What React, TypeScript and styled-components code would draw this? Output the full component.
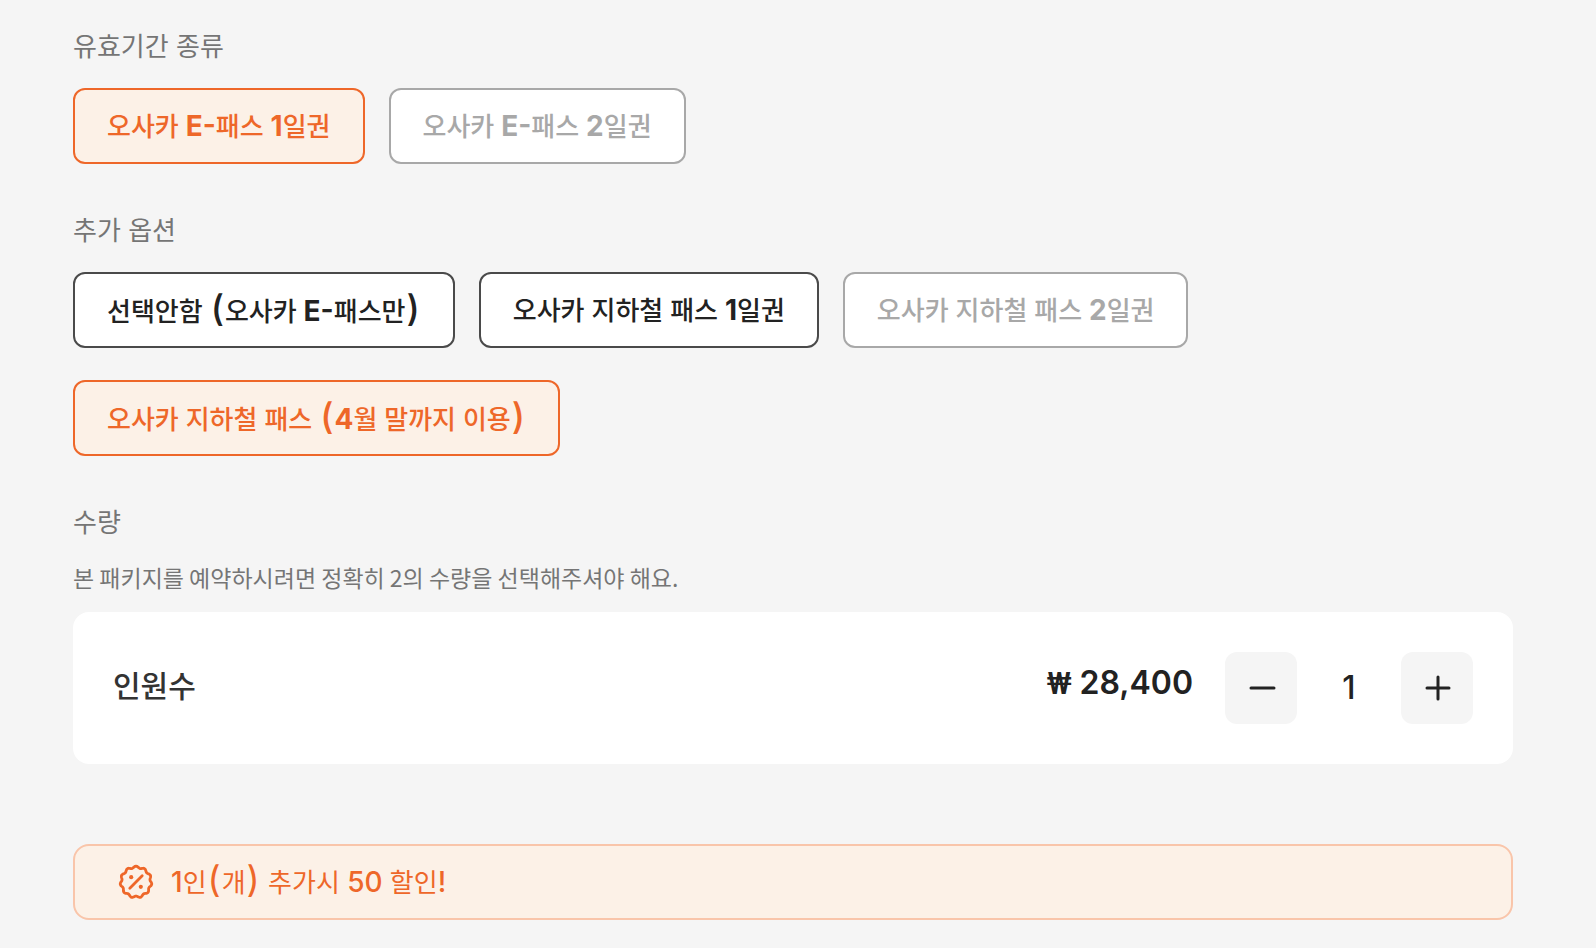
import { useState } from "react";
import styled, { createGlobalStyle, css } from "styled-components";

const GlobalStyle = createGlobalStyle`
  * { box-sizing: border-box; }
  body {
    margin: 0;
    background: #f5f5f5;
    color: #222222;
    font-family: Inter, "Noto Sans CJK KR", sans-serif;
    font-size: 26px;
  }
  button { font: inherit; cursor: pointer; }
`;

const Page = styled.main`
  display: flex;
  flex-direction: column;
  gap: 48px;
  padding: 28px 83px 28px 73px;
`;

const Section = styled.section`
  display: flex;
  flex-direction: column;
`;

const Heading = styled.h2`
  margin: 0 0 22px;
  font-size: 26px;
  line-height: 38px;
  font-weight: 400;
  color: #757575;
`;

const Options = styled.div`
  display: flex;
  flex-wrap: wrap;
  gap: 32px 24px;
`;

type State = "selected" | "normal" | "disabled";

const tones = {
  selected: css`
    color: #ee6729;
    background: #fcf1e7;
    border-color: #ee6729;
  `,
  normal: css`
    color: #222222;
    background: #ffffff;
    border-color: #4a4a4a;
  `,
  disabled: css`
    color: #a8a8a8;
    background: #ffffff;
    border-color: #a8a8a8;
    cursor: default;
  `,
};

const OptionButton = styled.button<{ $state: State }>`
  height: 76px;
  padding: 2px 32px 0;
  border: 2px solid;
  border-radius: 12px;
  line-height: 40px;
  font-weight: 500;
  white-space: nowrap;
  ${({ $state }) => tones[$state]}
`;

const Latin = styled.span<{ $bold?: boolean }>`
  font-size: 28px;
  line-height: 1;
  font-weight: ${({ $bold }) => ($bold ? 700 : 500)};
`;

const Paren = styled.span<{ $bold?: boolean }>`
  padding: 0 1px;
  font-size: 36px;
  line-height: 1;
  font-weight: ${({ $bold }) => ($bold ? 500 : 400)};
`;

/* Hangul keeps the base size; Latin letters, digits and brackets run larger beside it. */
function MixedText({ text, bold }: { text: string; bold?: boolean }) {
  return (
    <>
      {text.split(/([A-Z0-9!-]+|[()])/).map((run, i) => {
        if (i % 2 === 0) return run;
        return /[()]/.test(run) ? (
          <Paren key={i} $bold={bold}>{run}</Paren>
        ) : (
          <Latin key={i} $bold={bold}>{run}</Latin>
        );
      })}
    </>
  );
}

const Description = styled.p`
  margin: 0 0 22px;
  font-family: "Noto Sans CJK KR", sans-serif;
  font-size: 23px;
  line-height: 26px;
  color: #757575;
`;

const Card = styled.div`
  display: flex;
  align-items: center;
  padding: 40px;
  border-radius: 16px;
  background: #ffffff;
`;

const CardLabel = styled.span`
  flex: 1;
  padding-bottom: 4px;
  font-size: 30px;
  line-height: 40px;
  font-weight: 500;
  color: #333333;
`;

const Price = styled.span`
  margin-right: 32px;
  padding-bottom: 10px;
  font-size: 32px;
  line-height: 40px;
  font-weight: 600;
`;

const Currency = styled.span`
  font-family: Roboto, sans-serif;
  font-weight: 500;
  line-height: 1;
`;

const Stepper = styled.div`
  display: flex;
  align-items: center;
`;

const StepButton = styled.button`
  display: grid;
  place-items: center;
  width: 72px;
  height: 72px;
  padding: 0;
  border: 0;
  border-radius: 12px;
  background: #f5f5f5;
  color: #222222;
`;

const Count = styled.output`
  width: 104px;
  text-align: center;
  font-size: 32px;
  line-height: 40px;
  font-weight: 500;
`;

const Banner = styled.aside`
  display: flex;
  align-items: center;
  gap: 14px;
  min-height: 76px;
  margin-top: 32px;
  padding: 0 40px;
  border: 2px solid #f9c5aa;
  border-radius: 16px;
  background: #fcf1e7;
  color: #ee6729;
  line-height: 40px;
  font-weight: 400;
`;

const DiscountIcon = () => {
  const points = Array.from({ length: 121 }, (_, i) => {
    const a = (i / 120) * Math.PI * 2;
    const r = 15 + 0.9 * Math.cos(11 * a);
    return `${(21 + r * Math.sin(a)).toFixed(2)} ${(21 - r * Math.cos(a)).toFixed(2)}`;
  });
  return (
    <svg width="42" height="42" viewBox="0 0 42 42" fill="none" aria-hidden="true">
      <path d={`M${points.join("L")}Z`} stroke="currentColor" strokeWidth="2.8" strokeLinejoin="round" />
      <path d="M14.8 27.2 27.2 14.8" stroke="currentColor" strokeWidth="2.8" strokeLinecap="round" />
      <circle cx="16.2" cy="16.2" r="2.1" fill="currentColor" />
      <circle cx="25.8" cy="25.8" r="2.1" fill="currentColor" />
    </svg>
  );
};

const StepIcon = ({ plus }: { plus?: boolean }) => (
  <svg width="32" height="32" viewBox="0 0 32 32" stroke="currentColor" strokeWidth="3" strokeLinecap="round" aria-hidden="true">
    <path d={plus ? "M6 16h22M17 5v22" : "M6 16h23"} />
  </svg>
);

type Option = { label: string; disabled?: boolean };

const periods: Option[] = [
  { label: "오사카 E-패스 1일권" },
  { label: "오사카 E-패스 2일권", disabled: true },
];

const extras: Option[] = [
  { label: "선택안함 (오사카 E-패스만)" },
  { label: "오사카 지하철 패스 1일권" },
  { label: "오사카 지하철 패스 2일권", disabled: true },
  { label: "오사카 지하철 패스 (4월 말까지 이용)" },
];

function OptionGroup({ title, options, initial }: { title: string; options: Option[]; initial: number }) {
  const [selected, setSelected] = useState(initial);
  return (
    <Section>
      <Heading>{title}</Heading>
      <Options role="group" aria-label={title}>
        {options.map(({ label, disabled }, i) => (
          <OptionButton
            key={label}
            type="button"
            disabled={disabled}
            aria-pressed={i === selected}
            $state={disabled ? "disabled" : i === selected ? "selected" : "normal"}
            onClick={() => setSelected(i)}
          >
            <MixedText text={label} bold />
          </OptionButton>
        ))}
      </Options>
    </Section>
  );
}

export default function App() {
  const [count, setCount] = useState(1);
  return (
    <>
      <GlobalStyle />
      <Page>
        <OptionGroup title="유효기간 종류" options={periods} initial={0} />
        <OptionGroup title="추가 옵션" options={extras} initial={3} />
        <Section>
          <Heading>수량</Heading>
          <Description>본 패키지를 예약하시려면 정확히 2의 수량을 선택해주셔야 해요.</Description>
          <Card>
            <CardLabel id="people">인원수</CardLabel>
            <Price>
              <Currency>₩ </Currency>28,400
            </Price>
            <Stepper role="group" aria-labelledby="people">
              <StepButton type="button" aria-label="빼기" onClick={() => setCount(Math.max(0, count - 1))}>
                <StepIcon />
              </StepButton>
              <Count>{count}</Count>
              <StepButton type="button" aria-label="더하기" onClick={() => setCount(count + 1)}>
                <StepIcon plus />
              </StepButton>
            </Stepper>
          </Card>
        </Section>
        <Banner>
          <DiscountIcon />
          <span>
            <MixedText text="1인(개) 추가시 50 할인!" />
          </span>
        </Banner>
      </Page>
    </>
  );
}
